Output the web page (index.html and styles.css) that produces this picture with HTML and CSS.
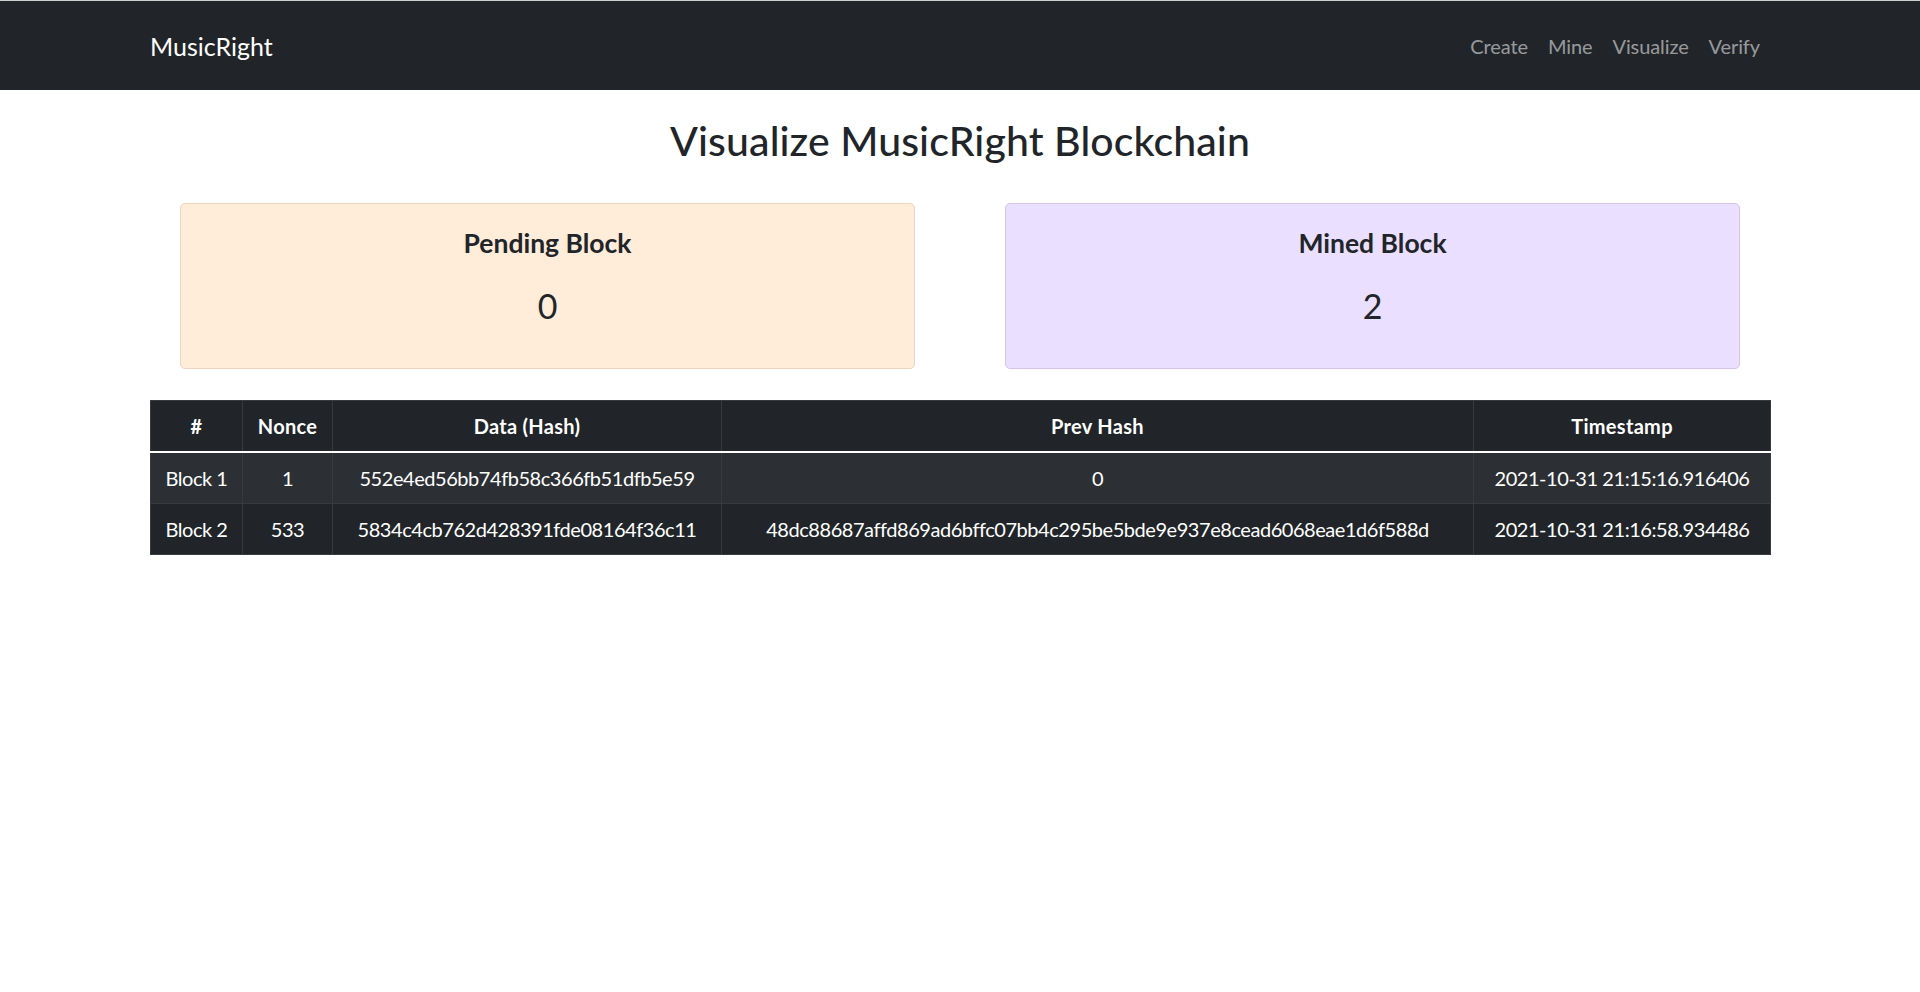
FILE: index.html
```html
<!DOCTYPE html>
<html lang="en">
<head>
<meta charset="utf-8">
<title>MusicRight - Visualize</title>
<link rel="stylesheet" href="styles.css">
</head>
<body>
<nav class="navbar">
  <div class="container nav-inner">
    <a class="brand" href="#">MusicRight</a>
    <ul class="nav-links">
      <li><a href="#">Create</a></li>
      <li><a href="#">Mine</a></li>
      <li><a href="#">Visualize</a></li>
      <li><a href="#">Verify</a></li>
    </ul>
  </div>
</nav>
<main class="container">
  <h2 class="page-title">Visualize MusicRight Blockchain</h2>
  <div class="stats">
    <div class="stat-card pending">
      <div class="stat-title">Pending Block</div>
      <div class="stat-value">0</div>
    </div>
    <div class="stat-card mined">
      <div class="stat-title">Mined Block</div>
      <div class="stat-value">2</div>
    </div>
  </div>
  <table class="chain">
    <colgroup>
      <col class="c-id">
      <col class="c-nonce">
      <col class="c-data">
      <col class="c-prev">
      <col class="c-time">
    </colgroup>
    <thead>
      <tr>
        <th>#</th>
        <th>Nonce</th>
        <th>Data (Hash)</th>
        <th>Prev Hash</th>
        <th>Timestamp</th>
      </tr>
    </thead>
    <tbody>
      <tr class="odd">
        <td>Block 1</td>
        <td>1</td>
        <td>552e4ed56bb74fb58c366fb51dfb5e59</td>
        <td>0</td>
        <td>2021-10-31 21:15:16.916406</td>
      </tr>
      <tr>
        <td>Block 2</td>
        <td>533</td>
        <td>5834c4cb762d428391fde08164f36c11</td>
        <td>48dc88687affd869ad6bffc07bb4c295be5bde9e937e8cead6068eae1d6f588d</td>
        <td>2021-10-31 21:16:58.934486</td>
      </tr>
    </tbody>
  </table>
</main>
</body>
</html>
```
FILE: styles.css
```css
* { box-sizing: border-box; }
html, body { margin: 0; padding: 0; }
body {
  font-family: "Lato", "Open Sans", "Liberation Sans", sans-serif;
  font-size: 20px;
  line-height: 30px;
  color: #212529;
  background: #ffffff;
}
.container {
  max-width: 1620px;
  margin: 0 auto;
}
.navbar {
  background: #212529;
  border-top: 1px solid #cfcfcf;
}
.nav-inner {
  height: 89px;
  display: flex;
  align-items: center;
  justify-content: space-between;
}
.brand {
  color: #ffffff;
  text-decoration: none;
  font-size: 25px;
  line-height: 37px;
  padding-top: 2px;
}
.nav-links {
  list-style: none;
  margin: 0;
  padding: 0;
  display: flex;
}
.nav-links a {
  display: block;
  padding: 0 10px;
  color: rgba(255, 255, 255, 0.55);
  text-decoration: none;
  font-size: 20px;
  line-height: 30px;
  letter-spacing: -0.1px;
}
.page-title {
  margin: 27px 0 38px;
  text-align: center;
  font-size: 41px;
  line-height: 48px;
  font-weight: 500;
  letter-spacing: 0.1px;
}
.stats {
  display: grid;
  grid-template-columns: 1fr 1fr;
  gap: 90px;
  padding: 0 30px;
}
.stat-card {
  border: 1px solid;
  border-radius: 5px;
  text-align: center;
  padding: 24px 20px 41px;
  display: flex;
  flex-direction: column;
  gap: 27px;
}
.stat-card.pending { background: #ffecd9; border-color: #ecd4bf; }
.stat-card.mined { background: #eadfff; border-color: #d3c5ef; }
.stat-title {
  font-size: 26.5px;
  line-height: 30px;
  font-weight: 700;
}
.stat-value {
  font-size: 34px;
  line-height: 42px;
  font-weight: 400;
}
.chain {
  width: 100%;
  margin-top: 31px;
  border-collapse: collapse;
  table-layout: fixed;
  background: #212529;
  color: #ffffff;
  text-align: center;
}
.c-id { width: 92px; }
.c-nonce { width: 90px; }
.c-data { width: 389px; }
.c-prev { width: 752px; }
.c-time { width: 297px; }
.chain th, .chain td {
  border: 1px solid #373b3e;
  padding: 10px 0;
  line-height: 30px;
  white-space: nowrap;
}
.chain th { font-weight: 700; letter-spacing: 0.3px; }
.chain td { letter-spacing: -0.45px; }
.chain tbody { border-top: 2px solid #ffffff; }
.chain tbody tr.odd { background: #2c3034; }
```
